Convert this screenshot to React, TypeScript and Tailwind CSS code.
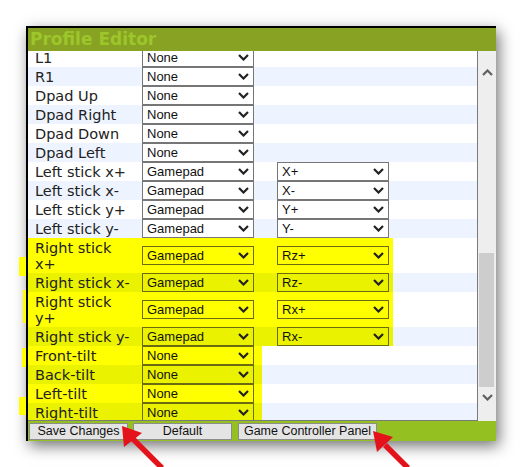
import { ReactNode } from "react";

type Hl = "wide" | "narrow" | undefined;

type Row = { label: string; a: string; b?: string; hl?: Hl };

const rows: Row[] = [
  { label: "L1", a: "None" },
  { label: "R1", a: "None" },
  { label: "Dpad Up", a: "None" },
  { label: "Dpad Right", a: "None" },
  { label: "Dpad Down", a: "None" },
  { label: "Dpad Left", a: "None" },
  { label: "Left stick x+", a: "Gamepad", b: "X+" },
  { label: "Left stick x-", a: "Gamepad", b: "X-" },
  { label: "Left stick y+", a: "Gamepad", b: "Y+" },
  { label: "Left stick y-", a: "Gamepad", b: "Y-" },
  { label: "Right stick x+", a: "Gamepad", b: "Rz+", hl: "wide" },
  { label: "Right stick x-", a: "Gamepad", b: "Rz-", hl: "wide" },
  { label: "Right stick y+", a: "Gamepad", b: "Rx+", hl: "wide" },
  { label: "Right stick y-", a: "Gamepad", b: "Rx-", hl: "wide" },
  { label: "Front-tilt", a: "None", hl: "narrow" },
  { label: "Back-tilt", a: "None", hl: "narrow" },
  { label: "Left-tilt", a: "None", hl: "narrow" },
  { label: "Right-tilt", a: "None", hl: "narrow" },
];

const Chevron = ({ up, className }: { up?: boolean; className?: string }) => (
  <svg width="11" height="7" viewBox="0 0 11 7" className={className}>
    <polyline
      points={up ? "1,6 5.5,1.5 10,6" : "1,1 5.5,5.5 10,1"}
      fill="none"
      stroke="currentColor"
      strokeWidth="2.2"
    />
  </svg>
);

const Select = ({ value, yellow }: { value: string; yellow?: boolean }) => (
  <div
    className={
      "w-[112px] h-[19px] border flex items-center justify-between pl-[4px] pr-[4px] shrink-0 " +
      (yellow ? "border-[#6b6b12] bg-transparent" : "border-[#767676] bg-white")
    }
  >
    <span className="text-[13px] leading-[17px] text-[#111] font-['Liberation_Sans',Arial,sans-serif]">
      {value}
    </span>
    <Chevron className="text-[#222]" />
  </div>
);

const RowLine = ({ row, idx }: { row: Row; idx: number }) => {
  const blue = idx % 2 === 1;
  const base = blue ? "bg-[#EEF4FF]" : "bg-white";
  const yellow = blue ? "bg-[#EBF200]" : "bg-[#FFFF00]";
  const cells: ReactNode = (
    <>
      <div className="w-[114px] shrink-0 pl-[7px] pr-[9px] py-[1.5px] leading-[16px] text-[14.5px] text-[#222]">
        {row.label}
      </div>
      <Select value={row.a} yellow={!!row.hl} />
      {row.b && (
        <div className="ml-[23px]">
          <Select value={row.b} yellow={!!row.hl} />
        </div>
      )}
    </>
  );
  if (row.hl) {
    return (
      <div className={"flex " + base}>
        <div
          className={
            "flex items-center " +
            yellow +
            (row.hl === "wide" ? " w-[365px]" : " w-[234px]")
          }
        >
          {cells}
        </div>
      </div>
    );
  }
  return <div className={"flex items-center " + base}>{cells}</div>;
};

const Button = ({ label, w }: { label: string; w: string }) => (
  <div
    className={
      "h-[17px] border border-[#8c8c8c] bg-[#E4E4E4] flex items-center justify-center text-[12.5px] text-[#111] font-['Liberation_Sans',Arial,sans-serif] " +
      w
    }
  >
    {label}
  </div>
);

export default function App() {
  return (
    <div className="relative w-[522px] h-[467px] bg-white overflow-hidden pt-[26px] pl-[26px] font-['DejaVu_Sans',Verdana,sans-serif]">
      <div className="w-[470px] border-l-2 border-t-2 border-black flex flex-col shadow-[3px_5px_14px_rgba(0,0,0,0.55)]">
        <div className="h-[23px] bg-[#88A224] pl-[2px] leading-[23px] text-[17px] font-bold text-[#9CC62A]">
          Profile Editor
        </div>
        <div className="h-[370px] flex">
          <div className="w-[450px] border-r border-b border-[#7a7a7a] overflow-hidden bg-white">
            <div className="-mt-[3px]">
              {rows.map((r, i) => (
                <RowLine key={r.label} row={r} idx={i} />
              ))}
            </div>
          </div>
          <div className="w-[18px] bg-[#EEEEEE] flex flex-col items-center text-[#606060]">
            <div className="h-[40px] flex items-center justify-center pt-[2px]">
              <Chevron up />
            </div>
            <div className="flex-1 w-full flex flex-col">
              <div className="h-[162px]" />
              <div className="ml-[1px] w-[15px] h-[134px] bg-[#CDCDCD]" />
            </div>
            <div className="h-[33px] flex items-start justify-center pt-[6px]">
              <Chevron />
            </div>
          </div>
        </div>
        <div className="h-[20px] bg-[#95C022] flex items-start pt-[2px] pl-[1px] gap-[5px]">
          <Button label="Save Changes" w="w-[99px]" />
          <Button label="Default" w="w-[99px]" />
          <Button label="Game Controller Panel" w="w-[139px] ml-[1px]" />
        </div>
      </div>

      {/* highlighter smears outside the window */}
      <div className="absolute left-[19px] top-[257px] w-[7px] h-[19px] bg-[#FFFF00]" />
      <div className="absolute left-[23px] top-[290px] w-[3px] h-[33px] bg-[#FFFF00]" />
      <div className="absolute left-[22px] top-[348px] w-[4px] h-[19px] bg-[#FFFF00]" />
      <div className="absolute left-[19px] top-[397px] w-[7px] h-[18px] bg-[#FFFF00]" />

      {/* red arrows */}
      <svg className="absolute left-0 top-0 pointer-events-none" width="522" height="467">
        <line x1="133" y1="439" x2="162" y2="468" stroke="#E3121B" strokeWidth="5.5" />
        <polygon points="122,426 124,447 142,433" fill="#E3121B" />
        <line x1="385" y1="445" x2="408" y2="468" stroke="#E3121B" strokeWidth="5.5" />
        <polygon points="373,431 377,452 393,437" fill="#E3121B" />
      </svg>
    </div>
  );
}
